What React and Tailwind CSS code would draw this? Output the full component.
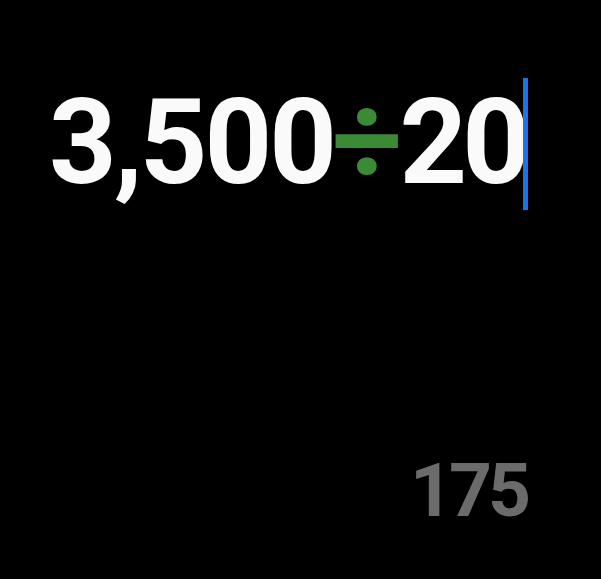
export default function App() {
  return (
    <div className="w-[601px] h-[579px] bg-black overflow-hidden" style={{ fontFamily: "Roboto, sans-serif" }}>
      <div className="flex flex-col pl-[49px] pr-[74px]">
        <div className="flex items-start mt-[78px]">
          <div className="flex items-baseline mt-[1px] leading-none font-bold text-[118px] tracking-[-3px] whitespace-nowrap">
            <span className="text-[#fafafa]">3,500</span>
            <span className="text-[#3b8a35] text-[124px] tracking-[-2px] ml-[-2px] mr-[-1px]">÷</span>
            <span className="text-[#fafafa] tracking-[-5px]">20</span>
          </div>
          <span className="w-[5px] h-[132px] bg-[#1a73e8] shrink-0 ml-[-2px]"></span>
        </div>
        <div className="flex justify-end mt-[243px] leading-none">
          <span className="text-[75px] font-bold text-[#6b6b6b] tracking-[-4px]">175</span>
        </div>
      </div>
    </div>
  );
}
